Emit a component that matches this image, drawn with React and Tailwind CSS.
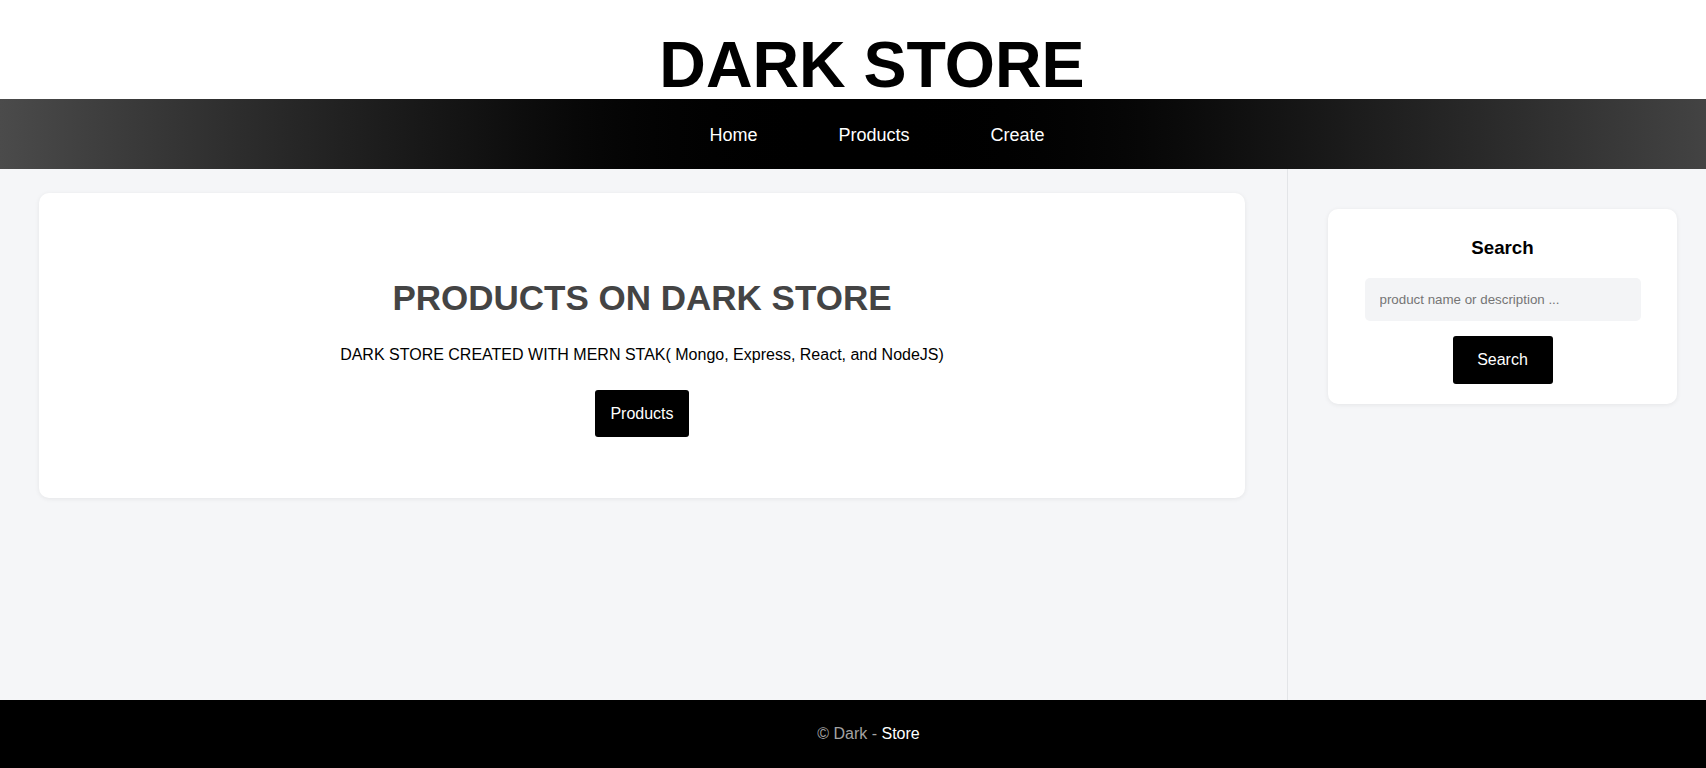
import React from "react";

const Header = () => (
    <>
        <div className="h-[99px] bg-white pt-[33px] pl-[38px] text-center">
            <h1 className="text-[64.5px] leading-none font-bold text-black">DARK STORE</h1>
        </div>
        <nav className="h-[70px] flex items-center justify-center pl-[48px] bg-gradient-to-r from-[#4b4b4b] via-black to-[#434343]">
            <ul className="flex gap-[81px] text-[18px] text-white pt-[2px]">
                <li><a href="#">Home</a></li>
                <li><a href="#">Products</a></li>
                <li><a href="#">Create</a></li>
            </ul>
        </nav>
    </>
);

const Footer = () => (
    <footer className="h-[68px] bg-black flex items-center justify-center pl-[31px] text-[16px]">
        <p className="text-[#a3a3a3]">
            © Dark - <span className="text-white">Store</span>
        </p>
    </footer>
);

const App = () => {
    return (
        <div className="min-h-screen bg-white font-['Liberation_Sans',Arial,sans-serif]">
            <Header />
            <main className="h-[531px] flex bg-[#f5f6f8]">
                {/* Hero card */}
                <section className="w-[1288px] border-r border-[#e3e5e8] pl-[39px] pt-[24px]">
                    <div className="w-[1206px] h-[305px] bg-white rounded-[10px] shadow-[0_1px_5px_rgba(0,0,0,0.07)] flex flex-col items-center pt-[85px]">
                        <h2 className="text-[35px] leading-[40px] font-bold text-[#444444]">PRODUCTS ON DARK STORE</h2>
                        <p className="mt-[28px] text-[16px] leading-[18px] text-black">
                            DARK STORE CREATED WITH MERN STAK( Mongo, Express, React, and NodeJS)
                        </p>
                        <button className="mt-[26px] h-[47px] px-[15px] bg-black text-white text-[16px] rounded-[3px]">
                            Products
                        </button>
                    </div>
                </section>

                {/* Search sidebar */}
                <aside className="flex-1 pl-[40px] pt-[40px]">
                    <div className="w-[349px] h-[195px] bg-white rounded-[10px] shadow-[0_1px_5px_rgba(0,0,0,0.07)] flex flex-col items-center pt-[28px]">
                        <h3 className="text-[18.72px] leading-[21px] font-bold text-black">Search</h3>
                        <input
                            type="text"
                            placeholder="product name or description ..."
                            className="mt-[20px] w-[276px] h-[43px] bg-[#f3f4f6] rounded-[5px] pl-[15px] text-[13.33px] outline-none placeholder:text-[#757575]"
                        />
                        <button className="mt-[15px] w-[100px] h-[48px] bg-black text-white text-[16px] rounded-[3px]">
                            Search
                        </button>
                    </div>
                </aside>
            </main>
            <Footer />
        </div>
    );
};

export default App;
